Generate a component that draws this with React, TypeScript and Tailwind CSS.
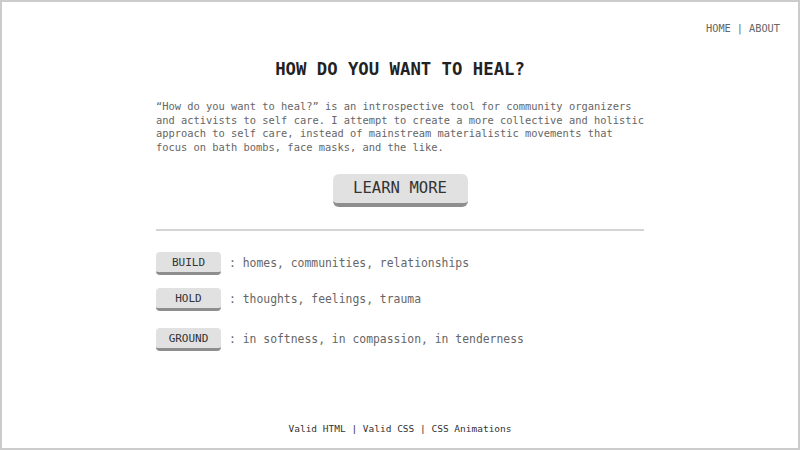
const mono = "font-['DejaVu_Sans_Mono',monospace]";

const tags = [
  { label: 'BUILD', text: ': homes, communities, relationships', gap: 'mt-[14px]' },
  { label: 'HOLD', text: ': thoughts, feelings, trauma', gap: 'mt-[13px]' },
  { label: 'GROUND', text: ': in softness, in compassion, in tenderness', gap: 'mt-[17px]' },
];

const App = () => {
  return (
    <div className={`h-[450px] w-[800px] border-2 border-[#cccccc] bg-white ${mono} flex flex-col`}>
      <nav className="flex justify-end pt-[19px] pr-[18px] text-[10.3px] leading-[14px] text-[#666]">
        <a href="#" className="hover:text-black">HOME</a>
        <span className="px-[6px]">|</span>
        <a href="#" className="hover:text-black">ABOUT</a>
      </nav>

      <main className="mx-auto mt-[23px] w-[488px] flex flex-col">
        <h1 className="text-center text-[17.3px] font-bold leading-[22px] tracking-normal text-[#222]">
          HOW DO YOU WANT TO HEAL?
        </h1>

        <p className="mt-[20px] text-[10.4px] leading-[13.6px] text-[#666]">
          “How do you want to heal?” is an introspective tool for community organizers
          and activists to self care. I attempt to create a more collective and holistic
          approach to self care, instead of mainstream materialistic movements that
          focus on bath bombs, face masks, and the like.
        </p>

        <div className="mt-[20px] flex justify-center">
          <button className="h-[33px] w-[135px] rounded-[6px] border-b-[4px] border-[#8e8e8e] bg-[#e1e1e1] text-[15.6px] leading-none text-[#333]">
            LEARN MORE
          </button>
        </div>

        <hr className="mt-[22px] border-0 border-t-2 border-[#d4d4d4]" />

        <ul className="mt-[21px]">
          {tags.map((t, i) => (
            <li key={t.label} className={`flex items-center ${i === 0 ? '' : t.gap}`}>
              <button className="h-[23px] w-[65px] rounded-[4px] border-b-[3px] border-[#8e8e8e] bg-[#e1e1e1] text-[11px] leading-none text-[#333]">
                {t.label}
              </button>
              <span className="ml-[8px] text-[11.4px] text-[#666]">{t.text}</span>
            </li>
          ))}
        </ul>
      </main>

      <footer className="mt-auto pb-[12px] text-center text-[9.5px] text-[#333]">
        Valid HTML | Valid CSS | CSS Animations
      </footer>
    </div>
  );
};

export default App;
